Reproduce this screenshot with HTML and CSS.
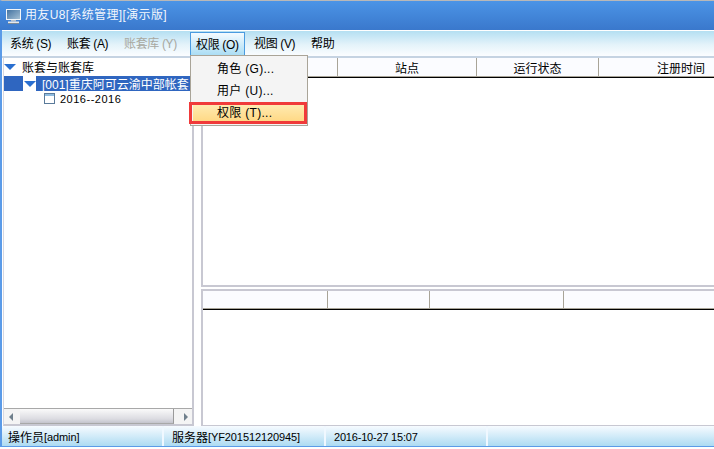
FILE: index.html
```html
<!DOCTYPE html>
<html lang="zh">
<head>
<meta charset="utf-8">
<title>用友U8</title>
<link rel="stylesheet" href="styles.css">
</head>
<body>
<div class="window">
  <header class="titlebar">
    <svg class="appicon" width="15" height="15" viewBox="0 0 15 15">
      <defs>
        <linearGradient id="scr" x1="0" y1="0" x2="1" y2="1">
          <stop offset="0" stop-color="#3f6f9f"/>
          <stop offset="1" stop-color="#a9c3d6"/>
        </linearGradient>
      </defs>
      <rect x="0.5" y="0.5" width="14" height="10" fill="url(#scr)" stroke="#f2f5f8"/>
      <rect x="5" y="11" width="5" height="1.5" fill="#b8c2cc"/>
      <rect x="2" y="12.5" width="11" height="2" fill="#e4e8ec"/>
      <rect x="2" y="14" width="11" height="1" fill="#7c8a98"/>
    </svg>
    <span class="title">用友U8[系统管理][演示版]</span>
  </header>
  <nav class="menubar">
    <span class="menu m-std">系统 (S)</span>
    <span class="menu m-std">账套 (A)</span>
    <span class="menu m-wide disabled">账套库 (Y)</span>
    <span class="menu active">权限 (O)</span>
    <span class="menu m-std">视图 (V)</span>
    <span class="menu">帮助</span>
  </nav>
  <div class="dropdown">
    <div class="ditem">角色 (G)...</div>
    <div class="ditem">用户 (U)...</div>
    <div class="ditem selected">权限 (T)...</div>
  </div>
  <main class="content">
    <aside class="treepanel">
      <div class="tree">
        <div class="node root"><span class="arrow"></span><span>账套与账套库</span></div>
        <div class="node account"><span class="arrowbox"><span class="arrow"></span></span><span class="nodetext">[001]重庆阿可云渝中部帐套</span></div>
        <div class="node year">
          <svg class="yearicon" width="11" height="11" viewBox="0 0 11 11"><rect x="0.5" y="0.5" width="10" height="10" fill="#fff" stroke="#5a7a9a"/><rect x="1" y="1" width="9" height="2" fill="#8fbce0"/></svg>
          <span>2016--2016</span>
        </div>
      </div>
      <div class="hscroll">
        <span class="sarrow left"></span>
        <span class="thumb"></span>
        <span class="sarrow right"></span>
      </div>
    </aside>
    <section class="lists">
      <div class="list top">
        <div class="thead cols-top">
          <span class="th"></span>
          <span class="th">站点</span>
          <span class="th">运行状态</span>
          <span class="th last">注册时间</span>
        </div>
      </div>
      <div class="list bottom">
        <div class="thead cols-bottom">
          <span class="th"></span>
          <span class="th"></span>
          <span class="th"></span>
          <span class="th last"></span>
        </div>
      </div>
    </section>
  </main>
  <footer class="statusbar">
    <span class="cell c1">操作员<span class="lat">[admin]</span></span>
    <span class="cell c2">服务器<span class="lat">[YF201512120945]</span></span>
    <span class="cell c3"><span class="lat">2016-10-27 15:07</span></span>
    <span class="cell c4"></span>
  </footer>
</div>
</body>
</html>
```
FILE: styles.css
```css
* { box-sizing: border-box; }
html, body { margin: 0; padding: 0; background: #fff; overflow: hidden; }
body {
  width: 714px;
  height: 449px;
  font-family: "Liberation Sans", "Noto Sans CJK SC", sans-serif;
  font-size: 12px;
  color: #000;
}
.window {
  position: relative;
  width: 714px;
  height: 447px;
  display: flex;
  flex-direction: column;
  border-top: 1px solid #b8b8b8;
  border-left: 2px solid #5b9be8;
  border-bottom: 1px solid #5b9be8;
  background: #fff;
}
.titlebar {
  height: 29px;
  margin-left: -2px;
  display: flex;
  align-items: center;
  gap: 4px;
  padding: 0 0 0 6px;
  background: linear-gradient(#4b94e6, #3a78cc);
  color: #fff;
  flex: none;
}
.appicon { flex: none; margin-top: 2px; }
.title { font-size: 12px; letter-spacing: 0.35px; color: #f2f6fc; position: relative; top: -2px; }
.menubar {
  height: 27px;
  flex: none;
  margin-top: 1px;
  padding: 1px 0 0 3px;
  display: flex;
  align-items: flex-start;
  border-bottom: 2px solid #c5d3e2;
  background: linear-gradient(#b4dff2, #e4f3fa 55%, #fbfdff);
}
.menu {
  display: flex;
  align-items: center;
  padding: 0 0 2px 5px;
  height: 23px;
  white-space: nowrap;
  letter-spacing: -0.35px;
  flex: none;
}
.m-std { width: 57px; }
.m-wide { width: 71px; }
.menu.disabled { color: #a8a8a0; }
.menu.active {
  margin-right: 4px;
  padding-left: 5px;
  width: 55px;
  height: 24px;
  border: 1px solid #4a9be0;
  border-bottom: 0;
  background: linear-gradient(#f4fbff, #a8dcf4);
}
.dropdown {
  position: absolute;
  left: 188px;
  top: 54px;
  width: 118px;
  height: 71px;
  padding: 2px 3px 3px 2px;
  border: 1px solid #a9a498;
  background: #f4f4f4;
  z-index: 5;
  display: flex;
  flex-direction: column;
}
.ditem { height: 22px; padding: 0 0 0 24px; line-height: 22px; white-space: nowrap; letter-spacing: 0.3px; flex: none; }
.ditem.selected {
  position: relative;
  background: linear-gradient(#ffeab0, #ffd986);
  margin-top: 3px;
  height: 16px;
  line-height: 16px;
}
.ditem.selected::after {
  content: "";
  position: absolute;
  left: -4px;
  right: -3px;
  top: -3px;
  bottom: -3px;
  border: 3px solid #f03a3a;
}
.content { flex: 1; display: flex; min-height: 0; padding: 0 0 0 1px; }
.treepanel {
  width: 191px;
  flex: none;
  display: flex;
  flex-direction: column;
  border-right: 2px solid #c8c8d2;
  border-bottom: 2px solid #c8c8d2;
  border-left: 1px solid #d8d8e0;
}
.tree { flex: 1; overflow: hidden; }
.node { display: flex; align-items: center; white-space: nowrap; }
.root { gap: 6px; height: 18px; padding: 0 0 1px 0; }
.arrow {
  display: block;
  width: 0;
  height: 0;
  border-left: 6px solid transparent;
  border-right: 6px solid transparent;
  border-top: 6px solid #2a6fd0;
}
.account {
  height: 15px;
  background: #2f66c0;
  color: #fff;
  padding-left: 19px;
}
.arrowbox { display: flex; align-items: center; justify-content: center; width: 13px; height: 15px; background: #fff; margin-right: 6px; flex: none; }
.year { height: 16px; padding-left: 40px; gap: 5px; font-size: 11px; letter-spacing: 0.5px; }
.yearicon { flex: none; margin-top: -1px; }
.hscroll {
  height: 16px;
  flex: none;
  display: flex;
  align-items: center;
  border-top: 1px solid #a8a8a8;
  background: #f4f4f4;
}
.sarrow { width: 0; height: 0; border-top: 4px solid transparent; border-bottom: 4px solid transparent; flex: none; }
.sarrow.left { border-right: 4px solid #70808c; margin: 0 7px 0 5px; }
.sarrow.right { border-left: 4px solid #70808c; margin: 0 4px 0 10px; }
.thumb { flex: 1; height: 15px; border-right: 1px solid #9a9a9a; border-bottom: 1px solid #a8a8a8; background: linear-gradient(#fafafa, #dcdce2 70%, #c4c4cc); }
.lists { flex: 1; min-width: 0; display: flex; flex-direction: column; gap: 2px; margin-left: 7px; overflow: hidden; }
.list { border-left: 2px solid #c8c8d2; background: #fff; overflow: hidden; }
.list.top { height: 229px; flex: none; border-bottom: 2px solid #c8c8d2; }
.list.bottom { flex: 1; border-top: 2px solid #c8c8d2; border-bottom: 1px solid #c8c8d2; }
.thead {
  display: grid;
  height: 20px;
  background: #fbfcff;
  border-bottom: 1px solid #000;
  box-shadow: inset 0 -1px 0 #a8a498;
  align-items: stretch;
}
.cols-top { grid-template-columns: 135px 139px 122px 164px; }
.cols-bottom { height: 19px; grid-template-columns: 125px 102px 134px 1fr; }
.th { display: flex; align-items: center; justify-content: center; border-right: 1px solid #a8a498; margin-bottom: 1px; white-space: nowrap; }
.th.last { border-right: 0; }
.statusbar {
  height: 20px;
  flex: none;
  display: flex;
  background: linear-gradient(#f7fbff, #addbf2);
}
.cell { display: flex; align-items: center; padding: 1px 0 0 6px; border-right: 2px solid #f0f8ff; white-space: nowrap; height: 20px; }
.lat { font-size: 11px; letter-spacing: -0.1px; }
.c1 { width: 162px; }
.c2 { width: 162px; padding-left: 8px; }
.c3 { width: 162px; padding-left: 8px; }
.c3 .lat { letter-spacing: -0.2px; }
.c4 { flex: 1; border-right: 0; }
```
